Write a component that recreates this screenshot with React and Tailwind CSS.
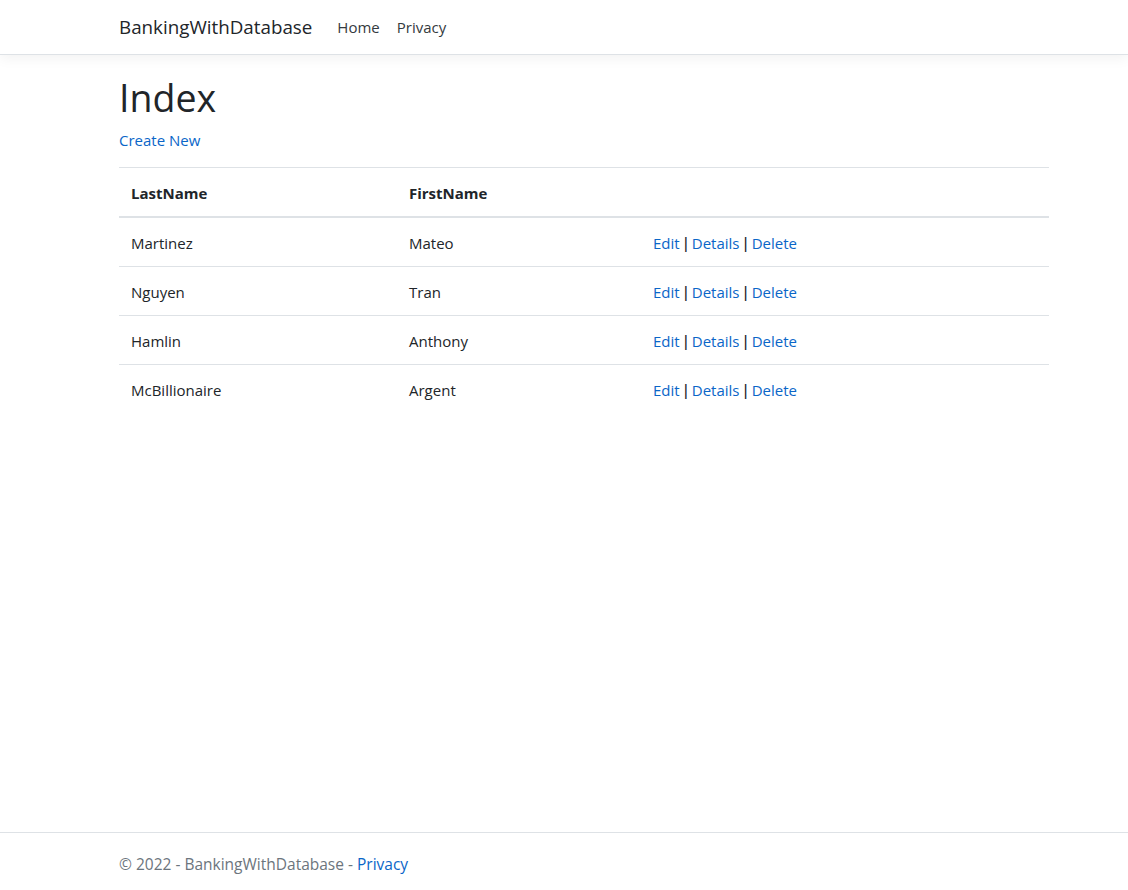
import React from "react";

const people = [
  { last: "Martinez", first: "Mateo" },
  { last: "Nguyen", first: "Tran" },
  { last: "Hamlin", first: "Anthony" },
  { last: "McBillionaire", first: "Argent" },
];

const font = { fontFamily: '"Open Sans", "Noto Sans", sans-serif' };

function Sep() {
  return (
    <span className="inline-block leading-none px-[4px] font-['Liberation_Sans',sans-serif] text-[16px]">
      |
    </span>
  );
}

export default function App() {
  return (
    <div
      className="min-h-screen flex flex-col bg-white text-[#212529] text-[15px] leading-6"
      style={font}
    >
      <header className="h-[55px] border-b border-[#dee2e6] bg-white shadow-[0_4px_12px_rgba(0,0,0,0.05)]">
        <nav className="ml-[119px] w-[930px] h-full flex items-center">
          <a className="text-[18.8px] text-[#212529] mr-[25px]">BankingWithDatabase</a>
          <a className="text-[#343a40] mr-[17px]">Home</a>
          <a className="text-[#343a40]">Privacy</a>
        </nav>
      </header>

      <main className="ml-[119px] w-[930px] pt-[19px]">
        <h1 className="text-[37.5px] leading-[48px] font-normal mb-[7px]">Index</h1>
        <p className="mb-[15px] -mt-[1px]">
          <a className="text-[#0a66c8]">Create New</a>
        </p>
        <table className="w-full border-collapse">
          <thead>
            <tr className="border-t border-[#dee2e6] border-b-2 border-b-[#dee2e6]">
              <th className="text-left font-bold px-[12px] pt-[13px] pb-[11px] w-[278px]">LastName</th>
              <th className="text-left font-bold px-[12px] pt-[13px] pb-[11px] w-[244px]">FirstName</th>
              <th className="px-[12px] pt-[13px] pb-[11px]"></th>
            </tr>
          </thead>
          <tbody>
            {people.map((p, i) => (
              <tr
                key={p.last}
                className={i < people.length - 1 ? "border-b border-[#dee2e6]" : ""}
              >
                <td className="px-[12px] pt-[13px] pb-[11px]">{p.last}</td>
                <td className="px-[12px] pt-[13px] pb-[11px]">{p.first}</td>
                <td className="px-[12px] pt-[13px] pb-[11px]">
                  <a className="text-[#0a66c8]">Edit</a>
                  <Sep />
                  <a className="text-[#0a66c8]">Details</a>
                  <Sep />
                  <a className="text-[#0a66c8]">Delete</a>
                </td>
              </tr>
            ))}
          </tbody>
        </table>
      </main>

      <footer className="mt-auto border-t border-[#dee2e6] h-[58px] text-[#6c757d] text-[15.5px]">
        <div className="ml-[119px] w-[930px] leading-[62px]">
          © 2022 - BankingWithDatabase - <a className="text-[#0a66c8]">Privacy</a>
        </div>
      </footer>
    </div>
  );
}
